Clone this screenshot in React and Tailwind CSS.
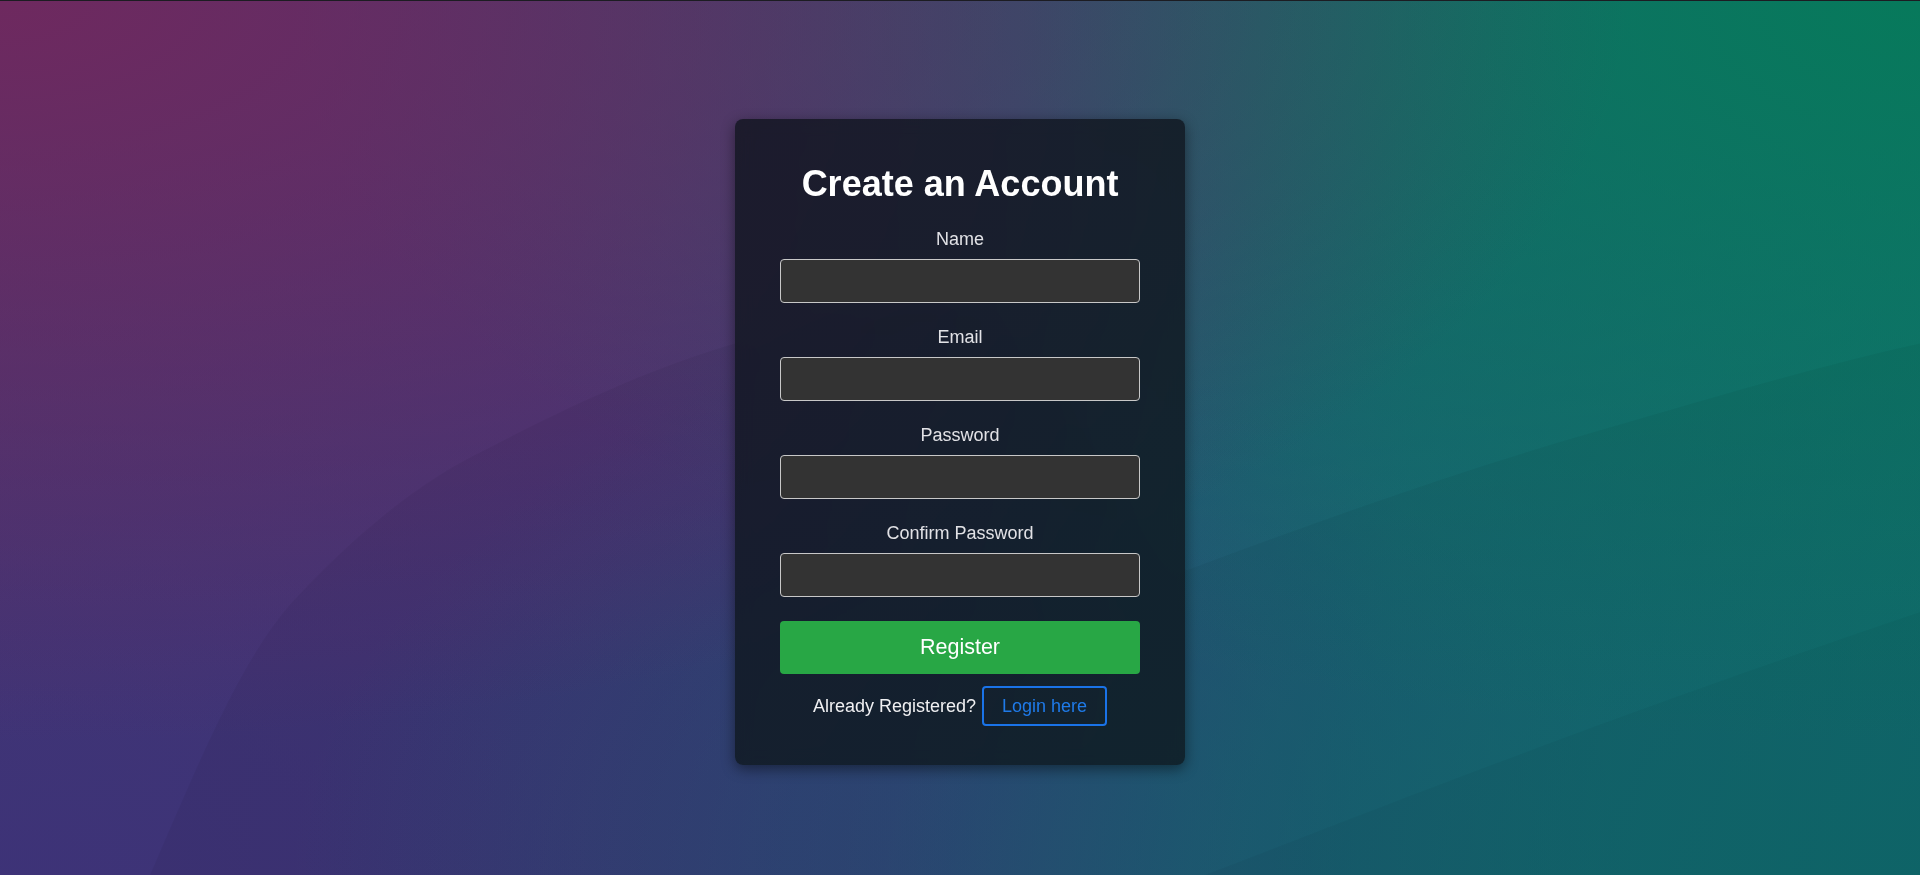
import React from 'react';

const fields = [
  { label: 'Name', type: 'text' },
  { label: 'Email', type: 'email' },
  { label: 'Password', type: 'password' },
  { label: 'Confirm Password', type: 'password' }
];

// soft wave shapes in the wallpaper
function Waves() {
  return (
    <svg
      className="absolute inset-0 w-full h-full pointer-events-none"
      viewBox="0 0 1920 875"
      preserveAspectRatio="none"
    >
      <path
        d="M150 875 C200 760 240 660 294 600 C360 530 420 480 490 447 C580 400 660 365 735 343 C820 318 900 300 960 300 C1050 320 1120 540 1187 570 C1320 520 1460 470 1603 429 C1720 395 1820 365 1920 343 L1920 875 Z"
        fill="#000"
        fillOpacity="0.045"
      />
      <path
        d="M1205 875 C1400 800 1600 720 1920 612 L1920 875 Z"
        fill="#000"
        fillOpacity="0.035"
      />
    </svg>
  );
}

function App() {
  return (
    <div
      className="relative min-h-screen overflow-hidden border-t border-[#1c1c22] bg-[radial-gradient(ellipse_at_0%_0%,rgba(112,40,94,0.95),rgba(112,40,94,0)_60%),radial-gradient(ellipse_at_100%_0%,rgba(6,122,90,0.95),rgba(6,122,90,0)_60%),radial-gradient(ellipse_at_100%_100%,rgba(16,108,112,0.9),rgba(16,108,112,0)_60%),radial-gradient(ellipse_at_0%_100%,rgba(60,50,120,0.9),rgba(60,50,120,0)_60%),linear-gradient(100deg,#483870_0%,#3a3a7a_50%,#205a74_72%,#137070_100%)]"
      style={{ fontFamily: '"Liberation Sans", Arial, sans-serif' }}
    >
      <Waves />

      <div className="relative flex justify-center pt-[118px]">
        <div className="w-[450px] rounded-lg bg-[linear-gradient(160deg,rgba(16,20,30,0.8),rgba(14,24,30,0.8))] backdrop-blur-sm shadow-[0_4px_14px_rgba(0,0,0,0.45)] px-[45px] pt-[44px] pb-[39px]">
          <h2 className="text-center text-[36px] leading-[42px] font-bold text-white mb-6">
            Create an Account
          </h2>

          {fields.map((field) => (
            <div key={field.label} className="mb-6">
              <label className="block text-center text-[18px] leading-[20px] text-[#e2e2e6]">
                {field.label}
              </label>
              <input
                type={field.type}
                className="mt-[10px] block w-full h-[44px] rounded-[4px] border border-[#c8c8c8] bg-[#333333] px-3 text-white outline-none"
              />
            </div>
          ))}

          <button className="w-full h-[53px] rounded-[4px] bg-[#28a745] text-white text-[21.5px]">
            Register
          </button>

          <div className="mt-3 flex items-center justify-center gap-[6px]">
            <span className="text-[18px] text-[#f0f0f2]">Already Registered?</span>
            <button className="h-[40px] px-[18px] rounded-[4px] border-2 border-[#1a73e8] text-[18px] text-[#1f7ae8] bg-transparent">
              Login here
            </button>
          </div>
        </div>
      </div>
    </div>
  );
}

export default App;
